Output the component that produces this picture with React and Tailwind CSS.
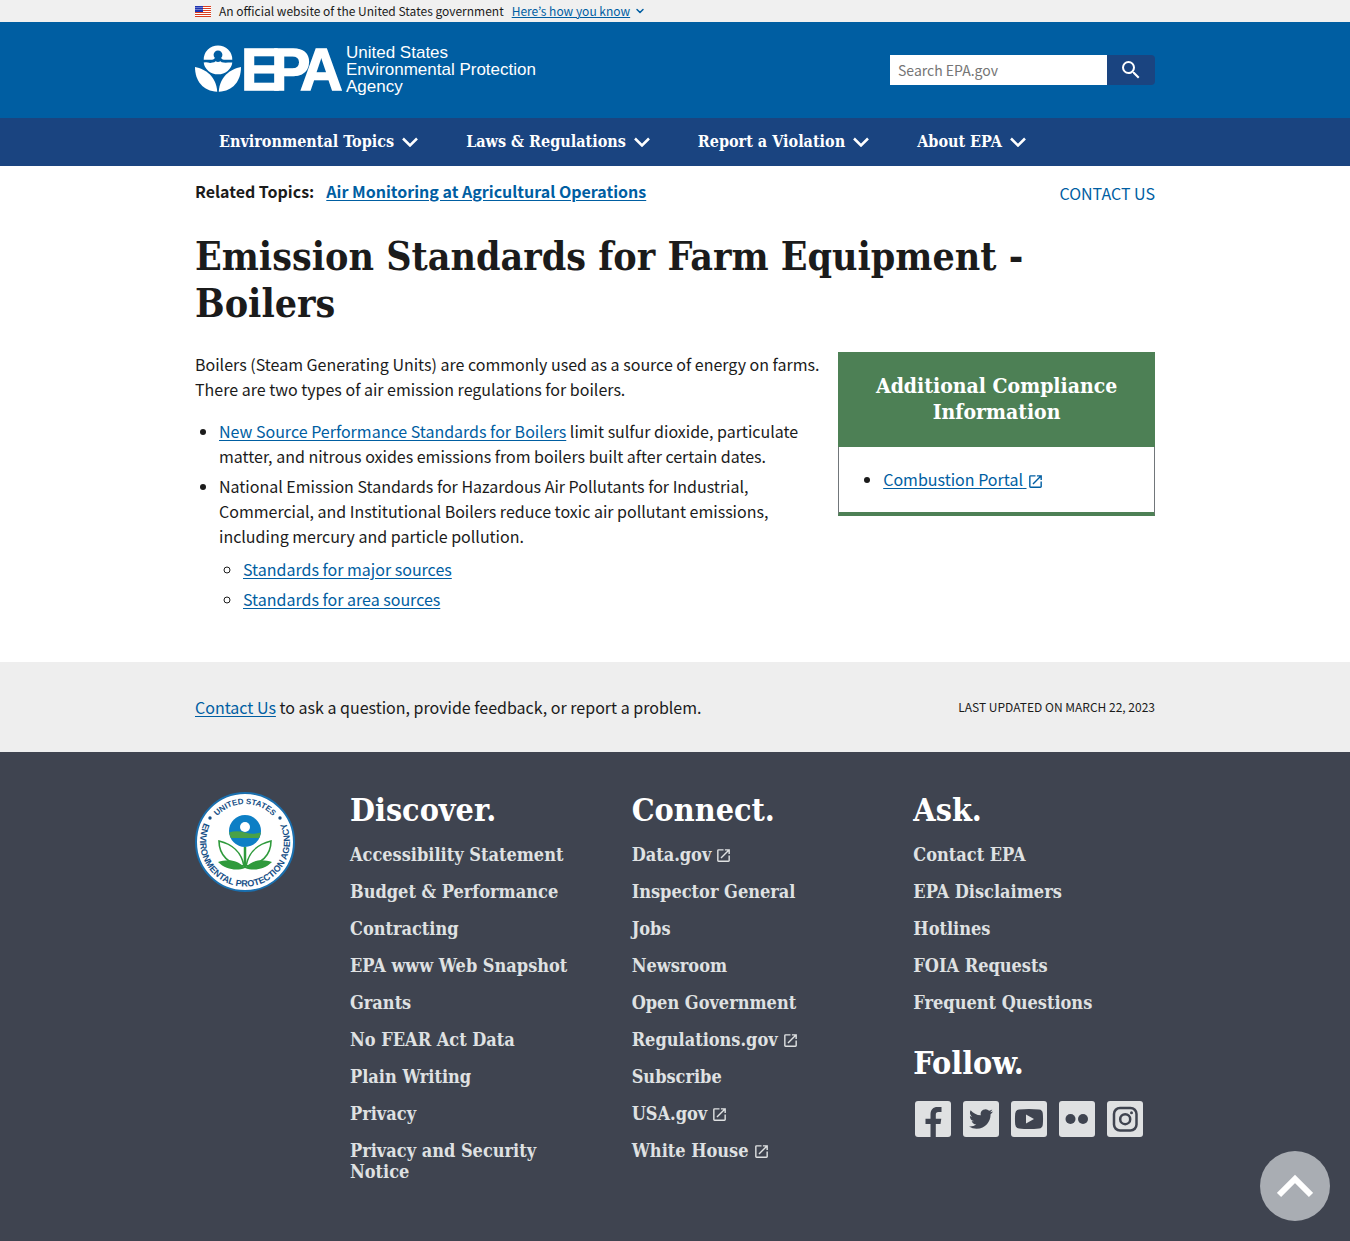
import React from "react";
import { ChevronDown } from "lucide-react";
import { MdLaunch, MdSearch } from "react-icons/md";

const serif = "font-['DejaVu_Serif_Condensed','DejaVu_Serif',serif] font-bold";
const link = "text-[#005ea2] underline underline-offset-2";

function Flag() {
  return (
    <svg viewBox="0 0 16 11" className="h-[11px] w-4" aria-hidden="true">
      <rect width="16" height="11" fill="#fff" />
      {[0, 2, 4, 6, 8, 10].map((y) => (
        <rect key={y} y={y} width="16" height="1" fill="#db3e1f" />
      ))}
      <rect width="8" height="6" fill="#1e33b1" />
      {[1, 3, 5, 7].map((x) => (
        <g key={x} fill="#fff">
          <rect x={x - 0.5} y="1" width="1" height="1" opacity=".7" />
          <rect x={x - 0.5} y="3" width="1" height="1" opacity=".7" />
        </g>
      ))}
    </svg>
  );
}

function Logo() {
  return (
    <svg viewBox="0 0 350 52" className="h-[52px] w-[350px] overflow-visible" role="img" aria-label="United States Environmental Protection Agency">
      <g fill="#fff">
        <path d="M8.700 15.700A14.300 14.300 0 0 1 37.300 15.700H29C27.300 15.700 26.300 14.600 26.200 13.800A4.400 4.400 0 1 0 19.800 13.800C19.700 14.600 18.700 15.700 17 15.700Z" />
        <path d="M8.700 18.600Q11 17.800 13 18.600T17.500 18.600Q19.500 18.300 20.600 17.200Q23 18.600 25.400 17.200Q26.500 18.300 28.500 18.600T33 18.600T37.300 18.600A14.400 13 0 0 1 23 30.300A14.400 13 0 0 1 8.700 18.600Z" />
        <path d="M0 23C11 25 21.500 33 22.200 47.800C8 47 0 37 0 23Z" />
        <path d="M46 23C35 25 24.500 33 23.800 47.800C38 47 46 37 46 23Z" />
      </g>
      <text x="46 76 105" y="46" fill="#fff" stroke="#fff" strokeWidth="1.500" fontFamily="Liberation Sans, Arial, sans-serif" fontWeight="700" fontSize="59">EPA</text>
      <g fill="#fff" fontFamily="Liberation Sans, Arial, sans-serif" fontSize="17">
        <text x="151" y="14">United States</text>
        <text x="151" y="31">Environmental Protection</text>
        <text x="151" y="48">Agency</text>
      </g>
    </svg>
  );
}

function Seal() {
  return (
    <svg viewBox="0 0 100 100" className="h-[100px] w-[100px]" role="img" aria-label="United States Environmental Protection Agency seal">
      <defs>
        <path id="seal-top" d="M12 50A38 38 0 0 1 88 50" />
        <path id="seal-bottom" d="M14.500 22A45 45 0 1 0 85.500 22" />
      </defs>
      <circle cx="50" cy="50" r="49" fill="#fff" stroke="#1a6fae" strokeWidth="2" />
      <g fill="#174f86" fontFamily="Liberation Sans, Arial, sans-serif" fontWeight="700">
        <text textAnchor="middle" fontSize="8">
          <textPath href="#seal-top" startOffset="50%">UNITED STATES</textPath>
        </text>
        <text textAnchor="middle" fontSize="9">
          <textPath href="#seal-bottom" startOffset="50%">ENVIRONMENTAL PROTECTION AGENCY</textPath>
        </text>
      </g>
      <circle cx="15" cy="26" r="1.700" fill="#174f86" />
      <circle cx="85" cy="26" r="1.700" fill="#174f86" />
      <circle cx="50" cy="39" r="16" fill="#0d7fc5" />
      <path d="M34 40.500Q42 38 50 40.500T66 40.500L64.200 46H35.800Z" fill="#4aa147" />
      <circle cx="50" cy="35" r="5" fill="#fff" />
      <path d="M50 55V76" stroke="#2f9a3c" strokeWidth="2.500" />
      <g fill="#fff" stroke="#2f9a3c" strokeWidth="1.600">
        <path d="M49 74C46 58 36 52 24 49C24 63 34 73 49 74Z" />
        <path d="M51 74C54 58 64 52 76 49C76 63 66 73 51 74Z" />
      </g>
      <path d="M50 76C42 67 32 67 23 70C31 78 42 79 50 76C58 79 69 78 77 70C68 67 58 67 50 76Z" fill="#2f9a3c" />
    </svg>
  );
}

const socials = [
  {
    name: "Facebook",
    art: <path d="M15.500 36V23H10.500V17.800H15.500V13.500C15.500 8.600 18.200 6 22.500 6H26.500V11H23.500C21.500 11 20.800 12 20.800 13.800V17.800H26.300L25.500 23H20.800V36Z" />,
  },
  {
    name: "Twitter",
    art: (
      <path
        transform="translate(6 6)"
        d="M23.953 4.570a10 10 0 0 1-2.825.775 4.958 4.958 0 0 0 2.163-2.723c-.951.555-2.005.959-3.127 1.184a4.920 4.920 0 0 0-8.384 4.482C7.690 8.095 4.067 6.130 1.640 3.162a4.822 4.822 0 0 0-.666 2.475c0 1.710.870 3.213 2.188 4.096a4.904 4.904 0 0 1-2.228-.616v.060a4.923 4.923 0 0 0 3.946 4.827 4.996 4.996 0 0 1-2.212.085 4.936 4.936 0 0 0 4.604 3.417 9.867 9.867 0 0 1-6.102 2.105c-.390 0-.779-.023-1.170-.067a13.995 13.995 0 0 0 7.557 2.209c9.053 0 13.998-7.496 13.998-13.985 0-.210 0-.420-.015-.630A9.935 9.935 0 0 0 24 4.590z"
      />
    ),
  },
  {
    name: "YouTube",
    art: <path fillRule="evenodd" d="M8 8.500Q18 7.500 28 8.500Q31.500 8.800 31.800 12.500Q32.300 18 31.800 23.500Q31.500 27.200 28 27.500Q18 28.500 8 27.500Q4.500 27.200 4.200 23.500Q3.700 18 4.200 12.500Q4.500 8.800 8 8.500ZM15 13.500V22.500L23 18Z" />,
  },
  {
    name: "Flickr",
    art: (
      <>
        <circle cx="11.500" cy="18" r="5" />
        <circle cx="24" cy="18" r="5" />
      </>
    ),
  },
  {
    name: "Instagram",
    art: (
      <>
        <rect x="7" y="7" width="22.500" height="22.500" rx="6" fill="none" stroke="#3f4450" strokeWidth="2.500" />
        <circle cx="18.200" cy="18.200" r="5" fill="none" stroke="#3f4450" strokeWidth="2.500" />
        <circle cx="24.500" cy="11.800" r="1.500" />
      </>
    ),
  },
];

const nav = ["Environmental Topics", "Laws & Regulations", "Report a Violation", "About EPA"];
const discover = ["Accessibility Statement", "Budget & Performance", "Contracting", "EPA www Web Snapshot", "Grants", "No FEAR Act Data", "Plain Writing", "Privacy", "Privacy and Security Notice"];
const connect = ["Data.gov", "Inspector General", "Jobs", "Newsroom", "Open Government", "Regulations.gov", "Subscribe", "USA.gov", "White House"];
const ask = ["Contact EPA", "EPA Disclaimers", "Hotlines", "FOIA Requests", "Frequent Questions"];
const external = ["Data.gov", "Regulations.gov", "USA.gov", "White House"];

function FooterList({ title, items }) {
  return (
    <section>
      <h2 className={`${serif} text-[32px] leading-9 text-white`}>{title}</h2>
      <ul className="mt-4 flex flex-col gap-4">
        {items.map((item) => (
          <li key={item} className={`${serif} text-[18px] leading-[21px]`}>
            <a href="#">
              {item}
              {external.includes(item) && <MdLaunch className="ml-1 inline size-[17px] align-[-3px]" aria-hidden="true" />}
            </a>
          </li>
        ))}
      </ul>
    </section>
  );
}

export default function App() {
  return (
    <div className="min-h-screen bg-white font-['Noto_Sans_CJK_KR',sans-serif] text-[16px] leading-[25px] text-[#1b1b1b]">
      <div className="bg-[#f0f0f0]">
        <div className="mx-auto flex h-[22px] max-w-5xl items-center px-8 text-[12px] leading-4">
          <Flag />
          <p className="ml-2">An official website of the United States government</p>
          <button type="button" className="ml-2 flex items-center gap-1 text-[#005ea2]">
            <span className="underline">Here’s how you know</span>
            <ChevronDown className="size-3" strokeWidth={3} aria-hidden="true" />
          </button>
        </div>
      </div>

      <header>
        <div className="bg-[#005ea2]">
          <div className="mx-auto flex h-24 max-w-5xl items-center justify-between px-8">
            <a href="#">
              <Logo />
            </a>
            <form role="search" className="flex w-[265px] items-stretch" onSubmit={(e) => e.preventDefault()}>
              <input
                type="search"
                aria-label="Search EPA.gov"
                placeholder="Search EPA.gov"
                className="h-[30px] min-w-0 flex-1 bg-white px-2 text-sm text-[#1b1b1b] placeholder:text-[#757575]"
              />
              <button type="submit" aria-label="Search" className="flex w-12 items-center justify-center rounded-r bg-[#1a4480] text-white">
                <MdSearch className="size-6" aria-hidden="true" />
              </button>
            </form>
          </div>
        </div>
        <nav aria-label="Primary" className="bg-[#1a4480]">
          <ul className="mx-auto flex h-12 max-w-5xl items-center gap-12 px-14">
            {nav.map((item) => (
              <li key={item}>
                <button type="button" className={`${serif} flex items-center gap-2 text-[16px] leading-6 text-white`}>
                  {item}
                  <svg viewBox="0 0 16 10" className="h-[10px] w-4" aria-hidden="true">
                    <path d="M1 1.500L8 8.500L15 1.500" fill="none" stroke="#fff" strokeWidth="2.500" />
                  </svg>
                </button>
              </li>
            ))}
          </ul>
        </nav>
      </header>

      <main className="mx-auto max-w-5xl px-8 pt-[13px] pb-[50px]">
        <div className="flex justify-between">
          <p className="font-bold">
            Related Topics:
            <a href="#" className={`${link} ml-3`}>Air Monitoring at Agricultural Operations</a>
          </p>
          <a href="#" className="mt-[2px] text-[#005ea2]">CONTACT US</a>
        </div>
        <h1 className={`${serif} mt-[27px] text-[39px] leading-[47px]`}>Emission Standards for Farm Equipment - Boilers</h1>
        <div className="mt-[25px] flex items-start gap-3">
          <div className="min-w-0 flex-1">
            <p>Boilers (Steam Generating Units) are commonly used as a source of energy on farms. There are two types of air emission regulations for boilers.</p>
            <ul className="mt-[17px] list-disc space-y-[5px] pl-6">
              <li>
                <a href="#" className={link}>New Source Performance Standards for Boilers</a> limit sulfur dioxide, particulate matter, and nitrous oxides emissions from boilers built after certain dates.
              </li>
              <li>
                National Emission Standards for Hazardous Air Pollutants for Industrial, Commercial, and Institutional Boilers reduce toxic air pollutant emissions, including mercury and particle pollution.
                <ul className="mt-2 list-[circle] space-y-[5px] pl-6">
                  <li><a href="#" className={link}>Standards for major sources</a></li>
                  <li><a href="#" className={link}>Standards for area sources</a></li>
                </ul>
              </li>
            </ul>
          </div>
          <aside className="w-[33%] border-x border-b-4 border-x-[#71767a] border-b-[#4d8055]">
            <h2 className={`${serif} -mx-px bg-[#4d8055] px-6 pt-[21px] pb-[22px] text-center text-[21px] leading-[26px] text-white`}>Additional Compliance Information</h2>
            <ul className="list-disc py-5 pr-5 pl-11">
              <li>
                <a href="#" className={link}>
                  Combustion Portal{" "}
                  <MdLaunch className="inline size-[17px] align-[-4px]" aria-hidden="true" />
                </a>
              </li>
            </ul>
          </aside>
        </div>
      </main>

      <div className="bg-[#eeeeee]">
        <div className="mx-auto flex h-[90px] max-w-5xl items-center justify-between px-8">
          <p><a href="#" className={link}>Contact Us</a> to ask a question, provide feedback, or report a problem.</p>
          <p className="text-xs">LAST UPDATED ON MARCH 22, 2023</p>
        </div>
      </div>

      <footer className="bg-[#3f4450] text-[#dfe1e2]">
        <div className="mx-auto grid max-w-5xl grid-cols-[115px_repeat(3,minmax(0,1fr))] gap-10 px-8 pt-10 pb-[59px]">
          <Seal />
          <FooterList title="Discover." items={discover} />
          <FooterList title="Connect." items={connect} />
          <div>
            <FooterList title="Ask." items={ask} />
            <h2 className={`${serif} mt-8 text-[32px] leading-9 text-white`}>Follow.</h2>
            <ul className="mt-5 flex gap-3 pl-[2px]">
              {socials.map(({ name, art }) => (
                <li key={name}>
                  <a href="#" aria-label={name}>
                    <svg viewBox="0 0 36 36" className="size-9" fill="#3f4450" aria-hidden="true">
                      <rect width="36" height="36" rx="3" fill="#dfe1e2" />
                      {art}
                    </svg>
                  </a>
                </li>
              ))}
            </ul>
          </div>
        </div>
      </footer>

      <a href="#" aria-label="Back to top" className="fixed right-5 bottom-5 flex size-[70px] items-center justify-center rounded-full bg-[#a9adb3]">
        <svg viewBox="0 0 36 24" className="h-6 w-9" aria-hidden="true">
          <path d="M2 21L18 5L34 21" fill="none" stroke="#fff" strokeWidth="6" />
        </svg>
      </a>
    </div>
  );
}
